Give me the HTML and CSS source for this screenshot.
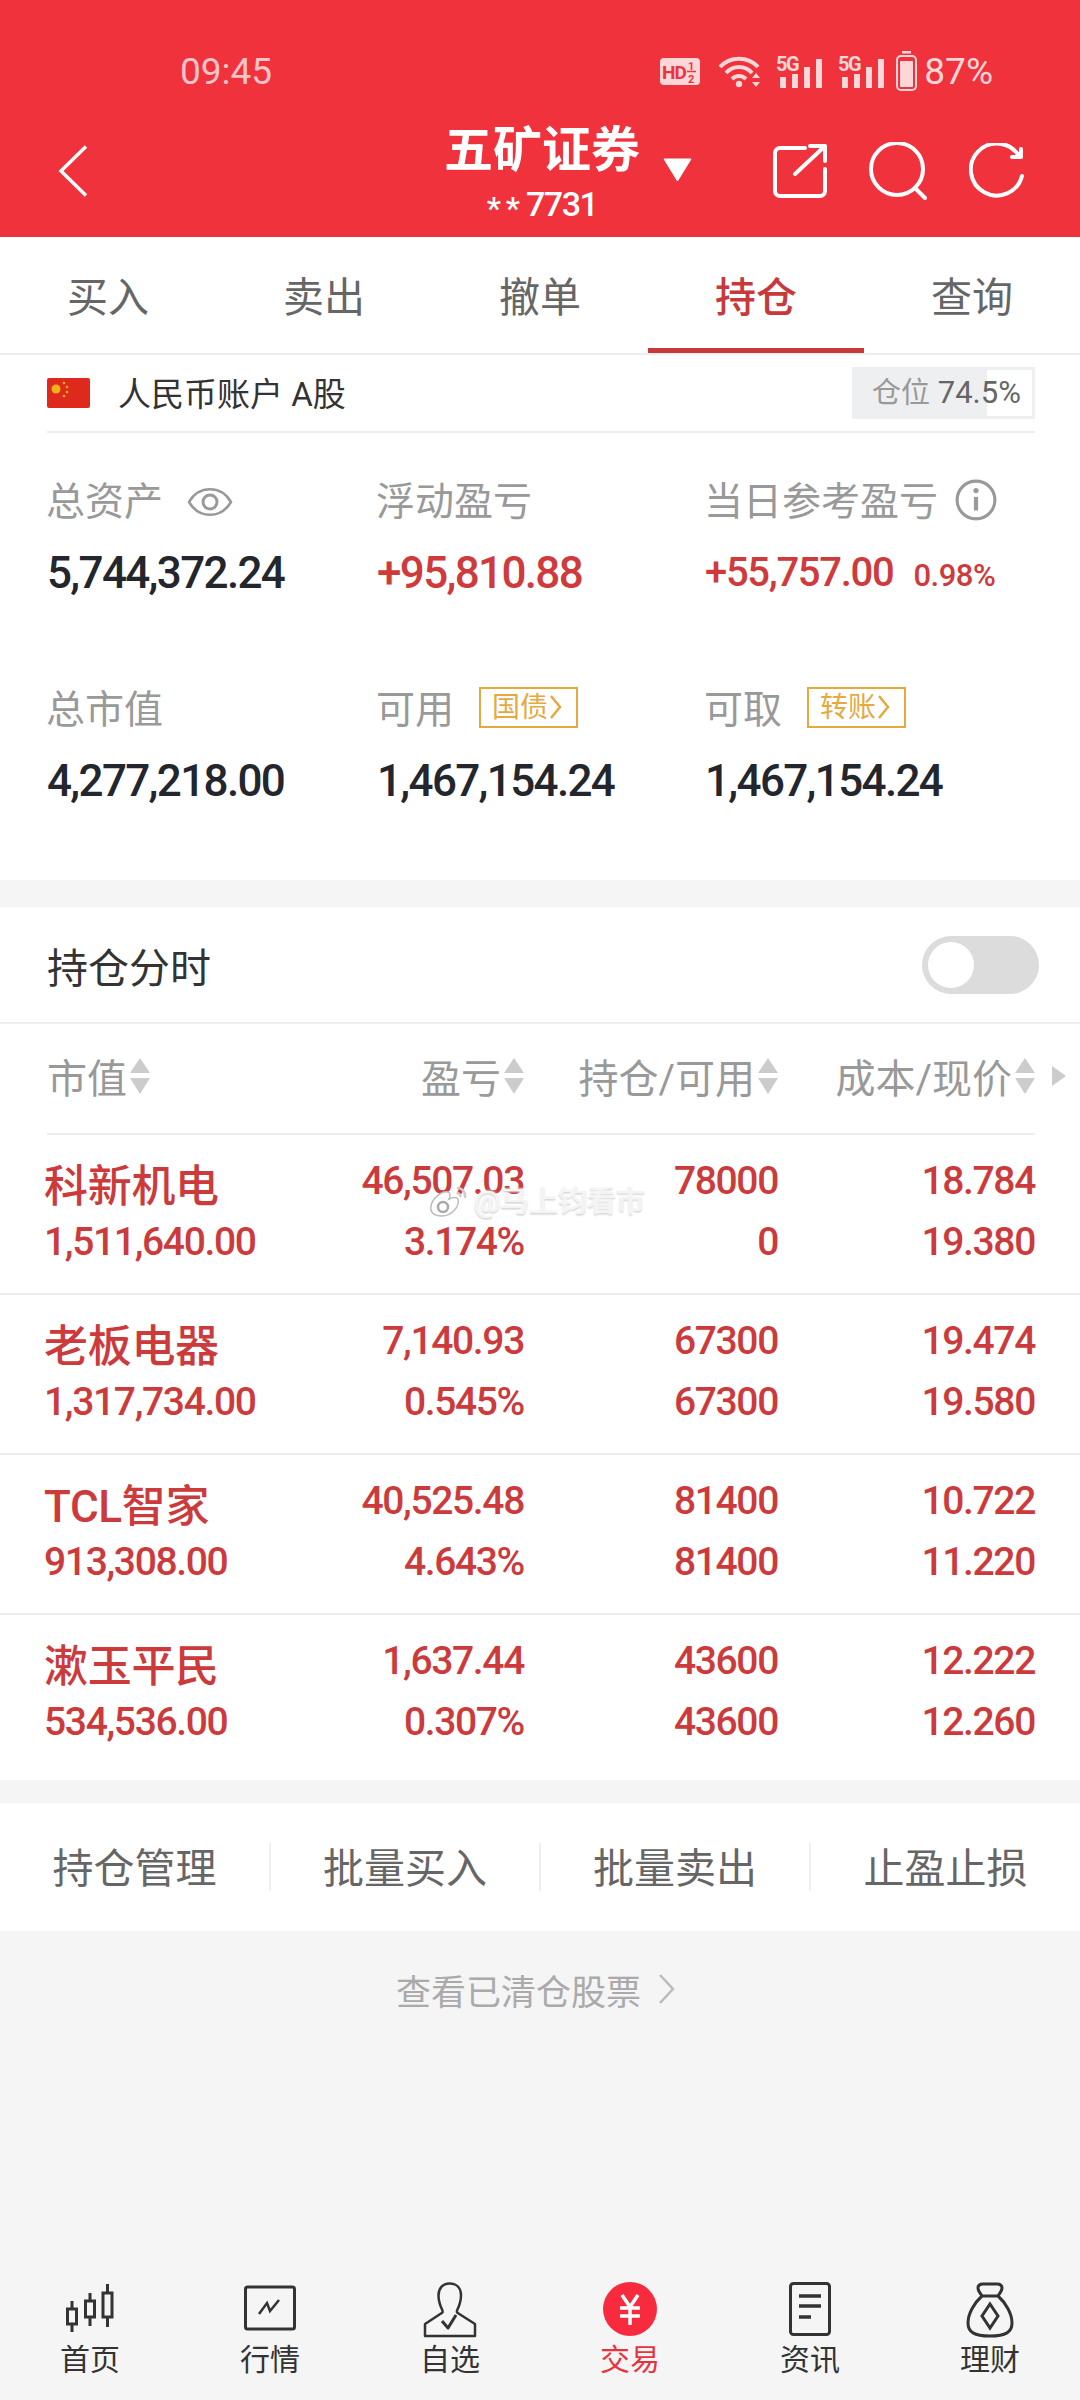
FILE: index.html
```html
<!DOCTYPE html>
<html lang="zh-CN">
<head>
<meta charset="utf-8">
<title>五矿证券 持仓</title>
<link rel="stylesheet" href="styles.css">
</head>
<body>
<div class="app">
  <header class="header">
    <div class="status">
      <span class="time">09:45</span>
      <div class="status-icons">
        <svg class="si-hd" width="40" height="28" viewBox="0 0 40 28"><rect width="40" height="27" rx="4" fill="#fdd6d8"/><text x="2" y="21" class="svg-hd">HD</text><text x="28" y="12" class="svg-frac">1</text><text x="28" y="25" class="svg-frac">2</text><path d="M27 13.500h9" stroke="#f0323c" stroke-width="1.500"/></svg>
        <svg class="si-wifi" width="44" height="36" viewBox="0 0 44 36" fill="none" stroke="#fdd6d8" stroke-width="4"><path d="M2 14C12 3 30 3 40 14"/><path d="M8 20C15 12 27 12 34 20"/><path d="M14 26C18 22 24 22 28 26"/><circle cx="21" cy="31" r="3.200" fill="#fdd6d8" stroke="none"/><path d="M34 25l4-5 4 5zM34 29l4 5 4-5z" fill="#fdd6d8" stroke="none"/></svg>
        <svg class="si-sig" width="47" height="38" viewBox="0 0 47 38" fill="#fdd6d8"><text x="0" y="21" class="svg-5g">5G</text><rect x="4" y="27" width="6" height="11"/><rect x="16" y="24" width="6" height="14"/><rect x="28" y="17" width="6" height="21"/><rect x="40" y="9" width="6" height="29"/></svg>
        <svg class="si-sig2" width="47" height="38" viewBox="0 0 47 38" fill="#fdd6d8"><text x="0" y="21" class="svg-5g">5G</text><rect x="4" y="27" width="6" height="11"/><rect x="16" y="24" width="6" height="14"/><rect x="28" y="17" width="6" height="21"/><rect x="40" y="9" width="6" height="29"/></svg>
        <svg class="si-bat" width="21" height="40" viewBox="0 0 21 40"><rect x="6" y="0" width="9" height="2.500" fill="#fdd6d8"/><rect x="1" y="5" width="19" height="34" rx="4" fill="none" stroke="#fdd6d8" stroke-width="2"/><rect x="4" y="10" width="13" height="26" rx="1" fill="#fdd6d8"/></svg>
        <span class="pct">87%</span>
      </div>
    </div>
    <div class="topbar">
      <div class="top-left">
        <svg class="back" width="30" height="52" viewBox="0 0 30 52" fill="none" stroke="#fff" stroke-width="3.500"><path d="M28 1.500L3 26l25 24.500"/></svg>
      </div>
      <div class="top-title">
        <div class="broker">五矿证券</div>
        <div class="acct"><span class="stars">**</span>7731</div>
      </div>
      <div class="top-right">
        <svg class="caret" width="29" height="24" viewBox="0 0 29 24"><path d="M1 1h27L14.500 23z" fill="#fff" stroke="#fff" stroke-linejoin="round"/></svg>
        <div class="top-actions">
          <svg class="act-share" width="54" height="54" viewBox="0 0 54 54" fill="none" stroke="#fff" stroke-width="4" stroke-linecap="round" stroke-linejoin="round"><path d="M32 4H7a5 5 0 0 0-5 5v38a5 5 0 0 0 5 5h40a5 5 0 0 0 5-5V25"/><path d="M22 30L52 2M37 2h15v15"/></svg>
          <svg class="act-search" width="58" height="58" viewBox="0 0 58 58" fill="none" stroke="#fff" stroke-width="4" stroke-linecap="round"><circle cx="28" cy="27" r="26"/><path d="M46 46l10 10"/></svg>
          <svg class="act-refresh" width="56" height="56" viewBox="0 0 56 56" fill="none" stroke="#fff" stroke-width="4" stroke-linecap="round"><path d="M50 13A26 26 0 1 0 53 33"/><path d="M52 6v8H43" stroke-linejoin="round"/></svg>
        </div>
      </div>
    </div>
  </header>

  <nav class="tabs">
    <div class="tab">买入</div>
    <div class="tab">卖出</div>
    <div class="tab">撤单</div>
    <div class="tab active">持仓</div>
    <div class="tab">查询</div>
  </nav>

  <section class="assets">
    <div class="account">
      <svg class="flag" width="43" height="30" viewBox="0 0 43 30"><rect width="43" height="30" rx="2" fill="#de2a1c"/><circle cx="9" cy="11" r="4.500" fill="#f2b31a"/><circle cx="17" cy="5" r="1.300" fill="#f2b31a"/><circle cx="20" cy="9" r="1.300" fill="#f2b31a"/><circle cx="20" cy="14" r="1.300" fill="#f2b31a"/><circle cx="17" cy="18" r="1.300" fill="#f2b31a"/></svg>
      <span class="account-name">人民币账户 A股</span>
      <div class="ratio"><span class="ratio-free"></span><span class="ratio-text"><span class="ratio-key">仓位</span> 74.5%</span></div>
    </div>
    <div class="stats">
      <div class="stat">
        <div class="stat-label">总资产<svg class="eye" width="46" height="32" viewBox="0 0 46 32" fill="none" stroke="#999" stroke-width="2.500"><path d="M2 16C12-1 34-1 44 16 34 33 12 33 2 16z"/><circle cx="23" cy="16" r="7" stroke-width="3"/></svg></div>
        <div class="stat-value">5,744,372.24</div>
      </div>
      <div class="stat">
        <div class="stat-label">浮动盈亏</div>
        <div class="stat-value up">+95,810.88</div>
      </div>
      <div class="stat">
        <div class="stat-label">当日参考盈亏<svg class="info" width="42" height="42" viewBox="0 0 40 40" fill="none" stroke="#999" stroke-width="3"><circle cx="20" cy="20" r="18"/><circle cx="20" cy="11" r="2.500" fill="#999" stroke="none"/><path d="M20 17v13" stroke-width="4"/></svg></div>
        <div class="stat-value up stat-today">+55,757.00<span class="stat-small">0.98%</span></div>
      </div>
      <div class="stat">
        <div class="stat-label">总市值</div>
        <div class="stat-value">4,277,218.00</div>
      </div>
      <div class="stat">
        <div class="stat-label">可用<span class="badge">国债<svg width="13" height="26" viewBox="0 0 13 26" fill="none" stroke="#e6a93f" stroke-width="2.500"><path d="M2 2l9 11-9 11"/></svg></span></div>
        <div class="stat-value">1,467,154.24</div>
      </div>
      <div class="stat">
        <div class="stat-label">可取<span class="badge">转账<svg width="13" height="26" viewBox="0 0 13 26" fill="none" stroke="#e6a93f" stroke-width="2.500"><path d="M2 2l9 11-9 11"/></svg></span></div>
        <div class="stat-value">1,467,154.24</div>
      </div>
    </div>
  </section>

  <section class="holdings">
    <div class="toggle-row">
      <span class="toggle-label">持仓分时</span>
      <span class="toggle"><span class="knob"></span></span>
    </div>
    <div class="thead">
      <div class="th th-first">市值<svg class="sort" width="20" height="36" viewBox="0 0 20 36" fill="#ccc"><path d="M10 0l10 15H0zM0 20h20L10 36z"/></svg></div>
      <div class="th">盈亏<svg class="sort" width="20" height="36" viewBox="0 0 20 36" fill="#ccc"><path d="M10 0l10 15H0zM0 20h20L10 36z"/></svg></div>
      <div class="th">持仓/可用<svg class="sort" width="20" height="36" viewBox="0 0 20 36" fill="#ccc"><path d="M10 0l10 15H0zM0 20h20L10 36z"/></svg></div>
      <div class="th">成本/现价<svg class="sort" width="20" height="36" viewBox="0 0 20 36" fill="#ccc"><path d="M10 0l10 15H0zM0 20h20L10 36z"/></svg></div>
      <svg class="more" width="14" height="20" viewBox="0 0 14 20" fill="#ccc"><path d="M0 0l14 10L0 20z"/></svg>
    </div>

    <div class="row">
      <div class="c-name"><div class="name">科新机电</div><div class="n2">1,511,640.00</div></div>
      <div class="c-num"><div>46,507.03</div><div class="n2">3.174%</div></div>
      <div class="c-num"><div>78000</div><div class="n2">0</div></div>
      <div class="c-num"><div>18.784</div><div class="n2">19.380</div></div>
    </div>
    <div class="row">
      <div class="c-name"><div class="name">老板电器</div><div class="n2">1,317,734.00</div></div>
      <div class="c-num"><div>7,140.93</div><div class="n2">0.545%</div></div>
      <div class="c-num"><div>67300</div><div class="n2">67300</div></div>
      <div class="c-num"><div>19.474</div><div class="n2">19.580</div></div>
    </div>
    <div class="row">
      <div class="c-name"><div class="name">TCL智家</div><div class="n2">913,308.00</div></div>
      <div class="c-num"><div>40,525.48</div><div class="n2">4.643%</div></div>
      <div class="c-num"><div>81400</div><div class="n2">81400</div></div>
      <div class="c-num"><div>10.722</div><div class="n2">11.220</div></div>
    </div>
    <div class="row row-last">
      <div class="c-name"><div class="name">漱玉平民</div><div class="n2">534,536.00</div></div>
      <div class="c-num"><div>1,637.44</div><div class="n2">0.307%</div></div>
      <div class="c-num"><div>43600</div><div class="n2">43600</div></div>
      <div class="c-num"><div>12.222</div><div class="n2">12.260</div></div>
    </div>

    <div class="watermark">
      <svg width="42" height="34" viewBox="0 0 42 34"><path d="M30 14c2 8-7 17-16 17S2 27 3 21C4 14 14 5 20 7c3 1 2 5 1 7 4-2 8-2 9 0z" fill="#fff" stroke="#bbb" stroke-width="1.500"/><circle cx="15" cy="22" r="5" fill="none" stroke="#aaa" stroke-width="2.500"/><path d="M29 3c5 0 9 4 8 10M29 8c2 0 4 2 3 4" fill="none" stroke="#ccc" stroke-width="2.500"/></svg>
      <span>@马上钧看市</span>
    </div>
  </section>

  <section class="actions">
    <div class="action">持仓管理</div>
    <div class="action">批量买入</div>
    <div class="action">批量卖出</div>
    <div class="action">止盈止损</div>
  </section>

  <div class="cleared">查看已清仓股票<svg width="17" height="30" viewBox="0 0 17 30" fill="none" stroke="#bbb" stroke-width="2.500"><path d="M2 1l13 14L2 29"/></svg></div>

  <footer class="bottom">
    <div class="nav-item">
      <svg width="48" height="56" viewBox="0 0 48 56" fill="none" stroke="#333" stroke-width="3"><rect x="1.500" y="27" width="9" height="15"/><path d="M6 19v8M6 42v8"/><rect x="19.500" y="19" width="9" height="16"/><path d="M24 11v8M24 35v9"/><rect x="37" y="11" width="9" height="24"/><path d="M41.500 2v9M41.500 35v10"/></svg>
      <span>首页</span>
    </div>
    <div class="nav-item">
      <svg width="52" height="56" viewBox="0 0 52 56" fill="none" stroke="#333" stroke-width="3"><rect x="1.500" y="5" width="49" height="42" rx="2"/><path d="M15 32l8-11 3 8 9-11" stroke-width="2.500"/></svg>
      <span>行情</span>
    </div>
    <div class="nav-item">
      <svg width="54" height="56" viewBox="0 0 54 56" fill="none" stroke="#333" stroke-width="2.500" stroke-linejoin="round"><path d="M26.500 1.500c-7 0-11 5-11 12 0 6 2 11 4 15v2L2 42v12h50V42L34 30.500v-2c2-4 4-9 4-15 0-7-4-12-11.500-12z"/><path d="M19 39l6 7 8-13" stroke-width="3"/></svg>
      <span>自选</span>
    </div>
    <div class="nav-item nav-active">
      <svg width="54" height="56" viewBox="0 0 54 56"><circle cx="27" cy="27" r="27" fill="#f72a3e"/><path d="M19 13l8 12 8-12M17 26h20M17 34h20M27 25v18" fill="none" stroke="#fff" stroke-width="3.500"/></svg>
      <span>交易</span>
    </div>
    <div class="nav-item">
      <svg width="42" height="56" viewBox="0 0 42 56" fill="none" stroke="#333" stroke-width="3"><rect x="1.500" y="1.500" width="39" height="51" rx="3"/><path d="M10 14h22M10 24h22M10 35h12" stroke-width="3.500"/></svg>
      <span>资讯</span>
    </div>
    <div class="nav-item">
      <svg width="48" height="56" viewBox="0 0 48 56" fill="none" stroke="#333" stroke-width="3"><path d="M16 14c-2-3-4-5-4-8s2-4 5-4h14c3 0 5 1 5 4s-2 5-4 8"/><path d="M16 14h16c8 7 14 18 14 27 0 9-6 13-22 13S2 50 2 41c0-9 6-20 14-27z"/><path d="M24 22l8 12-8 12-8-12z"/></svg>
      <span>理财</span>
    </div>
  </footer>
</div>
</body>
</html>
```
FILE: styles.css
```css
* { box-sizing: border-box; }
html, body { margin: 0; padding: 0; }
body {
  font-family: Roboto, "Noto Sans CJK SC", sans-serif;
  background: #f5f5f5;
  color: #333;
}
svg { display: block; flex: none; }
.svg-hd { font: 700 19px "Roboto", sans-serif; fill: #f0323c; letter-spacing: -1px; }
.svg-frac { font: 700 11px "Roboto", sans-serif; fill: #f0323c; }
.svg-5g { font: 700 20px "Roboto", sans-serif; fill: #fdd6d8; letter-spacing: -1.500px; }

.app { width: 1080px; min-height: 2400px; display: flex; flex-direction: column; }

/* header */
.header { background: #f0323c; height: 237px; color: #fff; padding-top: 48px; }
.status { height: 48px; display: flex; align-items: center; padding-left: 180px; padding-right: 87px; justify-content: space-between; }
.time { font-size: 37px; line-height: 48px; color: #fcc4c8; }
.status-icons { display: flex; align-items: center; }
.si-wifi { margin-left: 18px; margin-top: -2px; }
.si-sig { margin-left: 14px; margin-top: -6px; }
.si-sig2 { margin-left: 15px; margin-top: -6px; }
.si-bat { margin-left: 11px; margin-top: -2px; }
.pct { margin-left: 7px; font-size: 37px; line-height: 48px; color: #fdd6d8; }

.topbar { display: grid; grid-template-columns: 442px 200px 1fr; height: 117px; margin-top: 24px; }
.top-left { padding-left: 58px; padding-top: 25px; }
.top-title { text-align: center; }
.broker { font-size: 49px; font-weight: 700; line-height: 56px; white-space: nowrap; margin-top: 3px; }
.acct { font-size: 34px; line-height: 40px; margin-top: 5px; letter-spacing: -1.500px; font-weight: 500; }
.stars { font-size: 32px; letter-spacing: 5px; position: relative; top: 3px; margin-right: 1px; }
.top-right { display: flex; align-items: flex-start; padding-right: 55px; }
.caret { margin-left: 21px; margin-top: 38px; }
.top-actions { margin-left: auto; margin-top: 22px; display: flex; align-items: center; gap: 42px; }

/* tabs */
.tabs { display: grid; grid-template-columns: repeat(5, 216px); height: 118px; background: #fff; border-bottom: 2px solid #eee; }
.tab { text-align: center; font-size: 41px; line-height: 122px; color: #666; position: relative; height: 116px; }
.tab.active { color: #c8393c; font-weight: 500; border-bottom: 5px solid #c8393c; }

/* assets */
.assets { background: #fff; height: 525px; padding-bottom: 0; }
.account { display: flex; align-items: center; margin: 0 45px 0 47px; height: 78px; border-bottom: 2px solid #eee; }
.account-name { margin-left: 28px; padding-top: 3px; font-size: 33px; line-height: 50px; color: #333; }
.ratio { margin-left: auto; width: 183px; height: 52px; background: #eeeff1; position: relative; display: flex; align-items: center; }
.ratio-free { position: absolute; right: 3px; top: 3px; bottom: 3px; width: 45px; background: #fff; }
.ratio-text { position: relative; padding-left: 20px; font-size: 31px; line-height: 46px; color: #666; white-space: nowrap; }
.ratio-key { color: #999; font-size: 29px; }
.stats { display: grid; grid-template-columns: 330px 328px 1fr; row-gap: 87px; padding: 44px 0 0 47px; }
.stat-label { display: flex; align-items: center; font-size: 39px; line-height: 50px; height: 50px; color: #999; white-space: nowrap; margin-left: -1px; }
.stat-value { margin-top: 21px; font-size: 44px; font-weight: 500; line-height: 50px; height: 50px; color: #23262c; white-space: nowrap; letter-spacing: -1.650px; }
.stat-value.up { color: #cf3a3c; }
.stat-today { font-size: 40px; letter-spacing: -1.300px; }
.stat-small { font-size: 31px; margin-left: 20px; letter-spacing: -.5px; }
.eye { margin-left: 24px; }
.info { margin-left: 17px; margin-top: -4px; }
.badge { margin-left: 25px; width: 99px; height: 41px; border: 2px solid #e6a93f; color: #e6a93f; font-size: 28px; line-height: 37px; display: flex; align-items: center; padding-left: 11px; gap: 1px; margin-top: -6px; }

/* holdings */
.holdings { margin-top: 27px; background: #fff; position: relative; }
.toggle-row { height: 117px; display: flex; align-items: center; justify-content: space-between; padding: 0 41px 0 47px; border-bottom: 2px solid #eee; }
.toggle-label { font-size: 41px; color: #333; }
.toggle { width: 117px; height: 58px; border-radius: 29px; background: #dcdcdc; padding: 6px; display: block; }
.knob { display: block; width: 46px; height: 46px; border-radius: 50%; background: #fff; }
.thead { height: 111px; margin: 0 45px 0 47px; border-bottom: 2px solid #eee; display: grid; grid-template-columns: 227px 250px 254px 257px; align-items: center; position: relative; padding-bottom: 6px; }
.th { display: flex; align-items: center; justify-content: flex-end; gap: 3px; font-size: 40px; color: #999; white-space: nowrap; }
.th-first { justify-content: flex-start; }
.more { position: absolute; right: -31px; top: 42px; }
.row { height: 160px; padding: 21px 45px 0 44px; border-bottom: 2px solid #eee; display: grid; grid-template-columns: 260px 220px 254px 257px; align-content: start; font-size: 39px; line-height: 50px; color: #cc3a3c; font-weight: 500; letter-spacing: -1.350px; }
.row-last { height: 165px; border-bottom: 0; }
.c-num { text-align: right; }
.c-name { white-space: nowrap; }
.name { font-size: 44px; height: 55px; line-height: 62px; font-weight: 500; letter-spacing: -.3px; }
.c-name .n2 { margin-top: 6px; }
.c-num .n2 { margin-top: 11px; }
.watermark { position: absolute; left: 428px; top: 277px; display: flex; align-items: center; gap: 4px; font-size: 29px; line-height: 36px; color: #f4f4f4; text-shadow: 0 0 2px #fff, 0 0 3px #fff, 0 1px 2px #999; }

/* actions */
.actions { margin-top: 23px; height: 128px; background: #fff; display: grid; grid-template-columns: 269px 270px 270px 271px; align-items: center; }
.action { height: 48px; text-align: center; font-size: 41px; line-height: 52px; color: #666; border-left: 2px solid #f0f0f0; white-space: nowrap; }
.action:first-child { border-left: 0; }

.cleared { margin-top: 35px; display: flex; align-items: center; justify-content: center; gap: 17px; height: 46px; font-size: 35px; color: #aaa; padding-right: 9px; }

/* bottom */
.bottom { margin-top: auto; display: grid; grid-template-columns: repeat(6, 180px); padding-bottom: 20px; }
.nav-item { display: flex; flex-direction: column; align-items: center; font-size: 30px; line-height: 40px; color: #333; }
.nav-item span { display: block; margin-top: 2px; }
.nav-active { color: #e8333e; }
```
